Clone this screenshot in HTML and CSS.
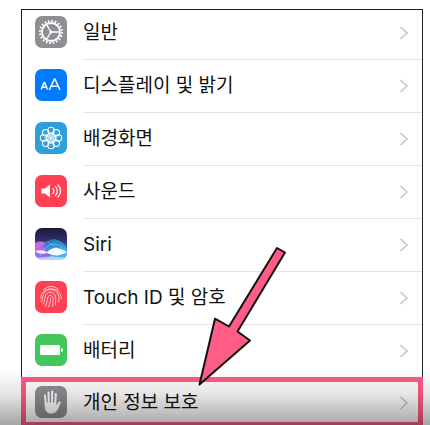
FILE: index.html
```html
<!DOCTYPE html>
<html lang="ko">
<head>
<meta charset="utf-8">
<meta name="viewport" content="width=device-width, initial-scale=1">
<title>설정</title>
<link rel="stylesheet" href="styles.css">
</head>
<body>
<main class="panel">
  <ul class="list">
    <li><a class="row row-first" href="#">
      <svg class="icon gray" viewBox="0 0 32 32" aria-hidden="true">
        <circle cx="16" cy="16" r="11" fill="none" stroke="#fff" stroke-width="2.2" stroke-dasharray="1.7 1.756"/>
        <circle cx="16" cy="16" r="9" fill="none" stroke="#fff" stroke-width="1.800"/>
        <circle cx="16" cy="16" r="1.500" fill="#fff"/>
        <path d="M16 16h8.500M16 16l-4.500-7.300M16 16l-4.500 7.300" stroke="#fff" stroke-width="1.400"/>
      </svg>
      <span class="label">일반</span>
      <svg class="chevron" viewBox="0 0 10 16" aria-hidden="true"><path d="M1.500 2L8 8l-6.500 6"/></svg>
    </a></li>
    <li><a class="row" href="#">
      <svg class="icon blue" viewBox="0 0 32 32" aria-hidden="true">
        <g fill="none" stroke="#fff" stroke-linejoin="round">
          <path d="M6.200 20.500l2.900-7h.5l2.900 7M7.200 18.300h4.300" stroke-width="1.500"/>
          <path d="M14.300 21l5-11h.6L25 21M16.200 17.200h6.900" stroke-width="1.500"/>
        </g>
      </svg>
      <span class="label">디스플레이 및 밝기</span>
      <svg class="chevron" viewBox="0 0 10 16" aria-hidden="true"><path d="M1.500 2L8 8l-6.500 6"/></svg>
    </a></li>
    <li><a class="row" href="#">
      <svg class="icon sky" viewBox="0 0 32 32" aria-hidden="true">
        <g fill="none" stroke="#fff" stroke-width="1.100">
          <circle cx="16" cy="8.500" r="3.200"/><circle cx="21.300" cy="10.700" r="3.200"/>
          <circle cx="23.500" cy="16" r="3.200"/><circle cx="21.300" cy="21.300" r="3.200"/>
          <circle cx="16" cy="23.500" r="3.200"/><circle cx="10.700" cy="21.300" r="3.200"/>
          <circle cx="8.500" cy="16" r="3.200"/><circle cx="10.700" cy="10.700" r="3.200"/>
          <g stroke-width=".8">
            <circle cx="16" cy="12.300" r="1.700"/><circle cx="18.600" cy="13.400" r="1.700"/>
            <circle cx="19.700" cy="16" r="1.700"/><circle cx="18.600" cy="18.600" r="1.700"/>
            <circle cx="16" cy="19.700" r="1.700"/><circle cx="13.400" cy="18.600" r="1.700"/>
            <circle cx="12.300" cy="16" r="1.700"/><circle cx="13.400" cy="13.400" r="1.700"/>
          </g>
        </g>
        <circle cx="16" cy="16" r="1.400" fill="#fff"/>
      </svg>
      <span class="label">배경화면</span>
      <svg class="chevron" viewBox="0 0 10 16" aria-hidden="true"><path d="M1.500 2L8 8l-6.500 6"/></svg>
    </a></li>
    <li><a class="row" href="#">
      <svg class="icon red" viewBox="0 0 32 32" aria-hidden="true">
        <path d="M6.500 13.500h3.500l5-4v13l-5-4H6.500z" fill="#fff"/>
        <path d="M18 13.500q1.800 2.500 0 5M20.500 11.500q3.600 4.500 0 9M23 9.800q5.200 6.200 0 12.400" fill="none" stroke="#fff" stroke-width="1.200" stroke-linecap="round"/>
      </svg>
      <span class="label">사운드</span>
      <svg class="chevron" viewBox="0 0 10 16" aria-hidden="true"><path d="M1.500 2L8 8l-6.500 6"/></svg>
    </a></li>
    <li><a class="row" href="#">
      <svg class="icon" viewBox="0 0 32 32" aria-hidden="true">
        <defs>
          <linearGradient id="night" x2="0" y2="1"><stop offset="0" stop-color="#1c1838"/><stop offset=".4" stop-color="#30306c"/><stop offset=".7" stop-color="#4b7de0"/><stop offset="1" stop-color="#9cc8fa"/></linearGradient>
          <linearGradient id="pink" x2="1" y2="1"><stop offset="0" stop-color="#e45fd8"/><stop offset="1" stop-color="#5b74f2"/></linearGradient>
          <linearGradient id="cyan" x2="1" y2="1"><stop offset="0" stop-color="#2377c4"/><stop offset="1" stop-color="#35c5f0"/></linearGradient>
        </defs>
        <path d="M0 0h32v32H0z" fill="url(#night)"/>
        <path d="M0 15q6-4 11 1t9 9q-10 9-20 3z" fill="url(#pink)"/>
        <path d="M8 18q6-9 15-6 5 2 9 8v8q-9 4-17-2z" fill="url(#cyan)" opacity=".85"/>
        <path d="M2 20q7-10 14-4t16 11" fill="none" stroke="#b1a4ff" opacity=".5"/>
        <path d="M5 28q7-13 15-12t12 10" fill="none" stroke="#77ecff" opacity=".5"/>
        <path d="M0 23.500q6-2.500 12 .5 6-5 11-4 4 1 9 4-4 3-9 3.500-5 .5-11-2.500-6 2-12-1.500z" fill="#effcff"/>
        <path d="M0 30q16-3 32 0v2H0z" fill="#cce6ff" opacity=".6"/>
      </svg>
      <span class="label">Siri</span>
      <svg class="chevron" viewBox="0 0 10 16" aria-hidden="true"><path d="M1.500 2L8 8l-6.500 6"/></svg>
    </a></li>
    <li><a class="row" href="#">
      <svg class="icon red" viewBox="0 0 32 32" aria-hidden="true">
        <g fill="none" stroke="#ffd5d9" stroke-width=".9" stroke-linecap="round">
          <path d="M8.500 8.500q7.500-6.500 15 0"/>
          <path d="M5.800 17.500c-.5-13 20.900-13 20.400 0"/>
          <path d="M6.500 20.500c1.500-2 .8-5 2-7.500 3-6.500 12.500-5.500 14.500 0 1 3 1.200 5 .8 8"/>
          <path d="M8 23c2.500-4 1.300-7 3-9.500 2.800-4 8.500-2.500 9.500 2 .5 3 .3 5.500-.4 8.500"/>
          <path d="M10.500 25c2.500-4.500 1.200-7.500 2.700-9.500 2-2.500 4.800-.8 5 2 .1 3-.3 5.300-1 8"/>
          <path d="M13.300 26c2-4 2.300-6 2.300-9"/>
        </g>
      </svg>
      <span class="label">Touch ID 및 암호</span>
      <svg class="chevron" viewBox="0 0 10 16" aria-hidden="true"><path d="M1.500 2L8 8l-6.500 6"/></svg>
    </a></li>
    <li><a class="row row-plain" href="#">
      <svg class="icon green" viewBox="0 0 32 32" aria-hidden="true">
        <rect x="5" y="11" width="20" height="10" rx="1" fill="#fff"/>
        <path d="M26 14q2 0 2 2t-2 2z" fill="#fff"/>
      </svg>
      <span class="label">배터리</span>
      <svg class="chevron" viewBox="0 0 10 16" aria-hidden="true"><path d="M1.500 2L8 8l-6.500 6"/></svg>
    </a></li>
    <li><a class="row row-marked" href="#">
      <svg class="icon gray" viewBox="0 0 32 32" aria-hidden="true">
        <g fill="none" stroke="#fff" stroke-width="2" stroke-linecap="round">
          <path d="M10 9.500L10.800 19M13.500 6.500L13.800 18M17.200 5.500L17 18M20.800 8L20.200 19"/>
          <path d="M24.500 16.500L21.500 21.500" stroke-width="2.300"/>
        </g>
        <path d="M9.700 16.500h11.500v3l2-1.800 1.800.6c-1.800 4-3 9.200-8 9.200h-1.500c-4.500 0-5.800-4-5.800-8z" fill="#fff"/>
      </svg>
      <span class="label">개인 정보 보호</span>
      <svg class="chevron" viewBox="0 0 10 16" aria-hidden="true"><path d="M1.500 2L8 8l-6.500 6"/></svg>
    </a></li>
  </ul>
</main>
<div class="shade"></div>
<svg class="arrow" viewBox="0 0 90 142" aria-hidden="true">
  <path d="M81 3l8 4.500-47.500 79L54 95.500 3.500 139.500 19 73.700l14 7.800z" fill="#ff5c86" stroke="#111" stroke-width="2" stroke-linejoin="round"/>
</svg>
</body>
</html>
```
FILE: styles.css
```css
* {
  box-sizing: border-box;
}

body {
  position: relative;
  min-height: 100vh;
  margin: 0;
  padding: 9px 7px 0 21px;
  overflow: hidden;
  background: #fff;
  color: #111;
  font-family: Inter, "Noto Sans CJK KR", sans-serif;
  font-size: 19px;
  line-height: 28px;
}

.panel {
  border: 1px solid #222;
  border-bottom: 0;
}

.list {
  margin: 0;
  padding: 0;
  list-style: none;
}

.row {
  display: grid;
  grid-template-columns: 32px 1fr 10px;
  column-gap: 16px;
  align-items: center;
  height: 53px;
  padding: 0 13px 4px;
  color: inherit;
  text-decoration: none;
  background: linear-gradient(#e3e3e5, #e3e3e5) 61px 100% / 100% 1px no-repeat;
}

.row-first {
  height: 50px;
  padding-bottom: 6px;
}

.row-plain {
  height: 52px;
  padding-bottom: 2px;
  background: none;
}

.row-marked {
  height: 48px;
  margin: 0 -1px;
  padding: 0 9px;
  border: 5px solid #ff5c86;
  border-bottom-width: 3px;
  background: none;
}

.label {
  padding-top: 2px;
}

.icon {
  display: block;
  width: 32px;
  height: 32px;
  border-radius: 7px;
}

.gray { background: #8e8e93; }
.blue { background: #007aff; }
.sky { background: #2f9fdc; }
.red { background: #ff4053; }
.green { background: #43c65b; }

.chevron {
  width: 10px;
  height: 16px;
  margin-top: 2px;
  fill: none;
  stroke: #c4c4c9;
  stroke-width: 1.5;
}

.shade {
  position: absolute;
  right: 0;
  bottom: 0;
  left: 0;
  height: 56px;
  background: linear-gradient(rgba(0, 0, 0, 0), rgba(0, 0, 0, 0.1) 45%, rgba(0, 0, 0, 0.35));
  pointer-events: none;
}

.arrow {
  position: absolute;
  top: 245px;
  left: 196px;
  width: 90px;
  height: 142px;
  pointer-events: none;
}
```
